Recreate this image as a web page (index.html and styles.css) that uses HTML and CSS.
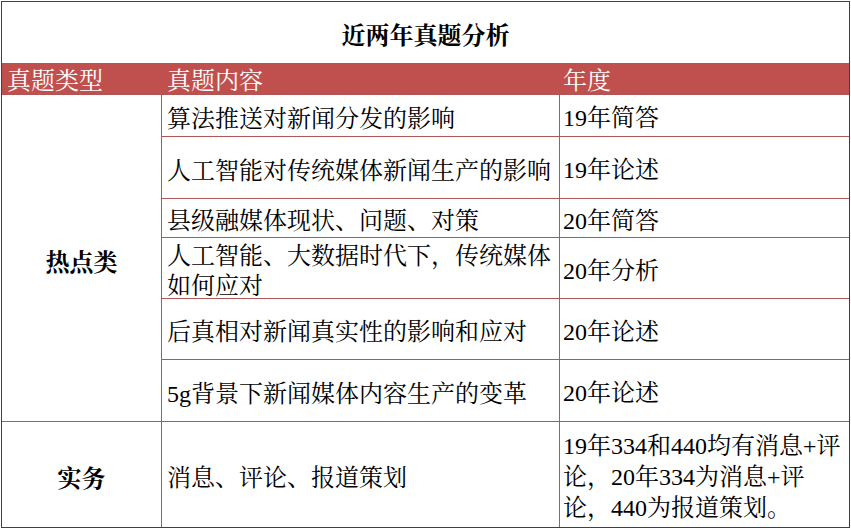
FILE: index.html
```html
<!DOCTYPE html>
<html lang="zh-CN">
<head>
<meta charset="utf-8">
<title>近两年真题分析</title>
<link rel="stylesheet" href="styles.css">
</head>
<body>
<div class="sheet">
  <div class="title">近两年真题分析</div>
  <div class="head">
    <div class="h h1">真题类型</div>
    <div class="h h2">真题内容</div>
    <div class="h h3">年度</div>
  </div>
  <div class="cat cat-hot">热点类</div>
  <div class="c2">算法推送对新闻分发的影响</div>
  <div class="c3">19年简答</div>
  <div class="c2">人工智能对传统媒体新闻生产的影响</div>
  <div class="c3">19年论述</div>
  <div class="c2">县级融媒体现状、问题、对策</div>
  <div class="c3">20年简答</div>
  <div class="c2">人工智能、大数据时代下，传统媒体<br>如何应对</div>
  <div class="c3">20年分析</div>
  <div class="c2">后真相对新闻真实性的影响和应对</div>
  <div class="c3">20年论述</div>
  <div class="c2">5g背景下新闻媒体内容生产的变革</div>
  <div class="c3">20年论述</div>
  <div class="cat cat-prac">实务</div>
  <div class="c2">消息、评论、报道策划</div>
  <div class="c3">19年334和440均有消息+评<br>论，20年334为消息+评<br>论，440为报道策划。</div>
</div>
</body>
</html>
```
FILE: styles.css
```css
html, body {
  margin: 0;
  padding: 0;
  background: #ffffff;
}
body {
  padding: 1px 0 0 1px;
  font-family: "Liberation Serif", "Noto Serif CJK SC", "Noto Sans CJK SC", serif;
  font-size: 24px;
  color: #000000;
}
.sheet {
  display: grid;
  width: max-content;
  grid-template-columns: 159px 397px 289px;
  grid-template-rows: 61px 30px 41px 61px 38px 60px 60px 61px 105px;
  gap: 1px;
  background: #b05656;
  border: 1px solid #7c2626;
}
.title {
  grid-column: 1 / span 3;
  background: #ffffff;
  font-weight: bold;
  display: flex;
  align-items: center;
  justify-content: center;
  padding-top: 2px;
}
.head {
  grid-column: 1 / span 3;
  display: grid;
  grid-template-columns: 159px 397px 289px;
  column-gap: 1px;
  background: #c0504d;
  color: #ffffff;
  line-height: 30px;
  margin-top: -1px;
  height: 31px;
}
.h {
  padding-top: 3px;
}
.h1 { padding-left: 5px; }
.h2 { padding-left: 5px; }
.h3 { padding-left: 3px; }
.cat {
  grid-column: 1;
  background: #ffffff;
  font-weight: bold;
  display: flex;
  align-items: center;
  justify-content: center;
  padding-top: 4px;
}
.cat-hot { grid-row: 3 / span 6; }
.cat-prac { grid-row: 9; }
.c2, .c3 {
  background: #ffffff;
  display: flex;
  align-items: center;
  line-height: 30px;
  padding-top: 6px;
}
.c2 { padding-left: 5px; }
.c3 { padding-left: 3px; line-height: 31px; }
```
